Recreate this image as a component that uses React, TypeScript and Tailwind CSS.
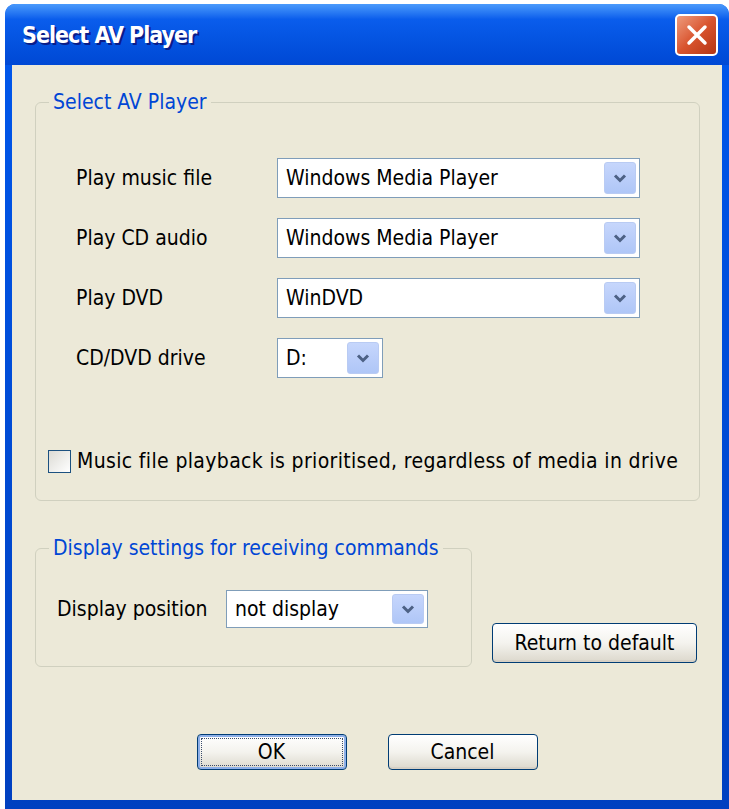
import React from "react";

const rows = [
  { label: "Play music file", value: "Windows Media Player", wide: true },
  { label: "Play CD audio", value: "Windows Media Player", wide: true },
  { label: "Play DVD", value: "WinDVD", wide: true },
  { label: "CD/DVD drive", value: "D:", wide: false },
];

function Chevron() {
  return (
    <svg width="14" height="10" viewBox="0 0 14 10">
      <path d="M2 2.5L7 7.5L12 2.5" fill="none" stroke="#4D6185" strokeWidth="3" strokeLinejoin="miter" />
    </svg>
  );
}

function Combo({ value, className }: { value: string; className: string }) {
  return (
    <div className={`flex items-stretch border border-[#7F9DB9] bg-white p-[3px] ${className}`}>
      <div className="flex-1 flex items-center pl-[5px] text-black truncate">{value}</div>
      <div className="w-[32px] rounded-[3px] bg-linear-to-b from-[#C6D6FC] to-[#AFC6F7] border border-[#B9CBF3] flex items-center justify-center">
        <Chevron />
      </div>
    </div>
  );
}

function XpButton({ children, focused, className }: { children: React.ReactNode; focused?: boolean; className: string }) {
  return (
    <button
      className={`rounded-[4px] border border-[#003C74] bg-linear-to-b from-white via-[#F4F3EE] to-[#DCD8CC] text-black flex items-center justify-center ${
        focused ? "p-[3px] shadow-[inset_0_0_0_2px_#8DAFE8]" : "shadow-[inset_0_-2px_0_#D6D0C5]"
      } ${className}`}
    >
      {focused ? (
        <span className="w-full h-full flex items-center justify-center border border-dotted border-[#3A4C6B]">{children}</span>
      ) : (
        children
      )}
    </button>
  );
}

export default function App() {
  return (
    <div
      className="min-h-screen bg-white pl-[5px] pt-[4px] text-[21px] leading-[24px] text-black"
      style={{ fontFamily: '"DejaVu Sans Condensed", "DejaVu Sans", sans-serif' }}
    >
      <div className="w-[724px] h-[805px] flex flex-col rounded-t-[10px] overflow-hidden bg-linear-to-b from-[#0058EE] to-[#0040C0]">
        {/* Title bar */}
        <div className="h-[61px] shrink-0 flex items-center justify-between pl-[17px] pr-[11px] bg-linear-to-b from-[#4A9AFB] from-0% via-[#0A5DEC] via-25% to-[#0048D4] to-100%">
          <span className="text-white font-bold text-[23px] tracking-[-1px] [text-shadow:2px_2px_0_#0A1D8A]">
            Select AV Player
          </span>
          <div className="w-[43px] h-[42px] rounded-[5px] border-2 border-white bg-linear-to-br from-[#ED9B7C] via-[#D9542E] to-[#B43515] flex items-center justify-center mt-[1px]">
            <svg width="24" height="24" viewBox="0 0 24 24">
              <path d="M4 4L20 20M20 4L4 20" stroke="white" strokeWidth="3.5" strokeLinecap="round" />
            </svg>
          </div>
        </div>

        {/* Body */}
        <div className="flex-1 mx-[7px] mb-[9px] bg-[#ECE9D8] flex flex-col">
          <fieldset className="ml-[23px] mt-[25px] w-[665px] border border-[#D0D0BF] rounded-[6px]">
            <legend className="ml-[13px] px-[4px] text-[#0046D5]">Select AV Player</legend>
            <div className="pl-[12px] pt-[44px] pb-[27px]">
              <div className="flex flex-col gap-[20px] pl-[28px]">
                {rows.map((r) => (
                  <div key={r.label} className="flex items-center h-[40px]">
                    <span className="w-[201px]">{r.label}</span>
                    <Combo value={r.value} className={`h-[40px] ${r.wide ? "w-[363px]" : "w-[106px]"}`} />
                  </div>
                ))}
              </div>
              <div className="flex items-center mt-[71px] gap-[6px]">
                <div className="w-[23px] h-[23px] border border-[#1C5180] bg-linear-to-br from-[#DCDBD5] to-white" />
                <span className="tracking-[0.35px]">Music file playback is prioritised, regardless of media in drive</span>
              </div>
            </div>
          </fieldset>

          <div className="flex items-end mt-[35px]">
            <fieldset className="ml-[23px] w-[437px] border border-[#D0D0BF] rounded-[6px]">
              <legend className="ml-[13px] px-[4px] text-[#0046D5]">Display settings for receiving commands</legend>
              <div className="flex items-center pl-[21px] pt-[30px] pb-[38px]">
                <span className="w-[169px]">Display position</span>
                <Combo value="not display" className="h-[38px] w-[202px]" />
              </div>
            </fieldset>
            <XpButton className="ml-[20px] mb-[4px] w-[205px] h-[40px]">Return to default</XpButton>
          </div>

          <div className="flex justify-center gap-[41px] mt-[67px]">
            <XpButton focused className="w-[150px] h-[36px]">OK</XpButton>
            <XpButton className="w-[150px] h-[36px]">Cancel</XpButton>
          </div>
        </div>
      </div>
    </div>
  );
}
